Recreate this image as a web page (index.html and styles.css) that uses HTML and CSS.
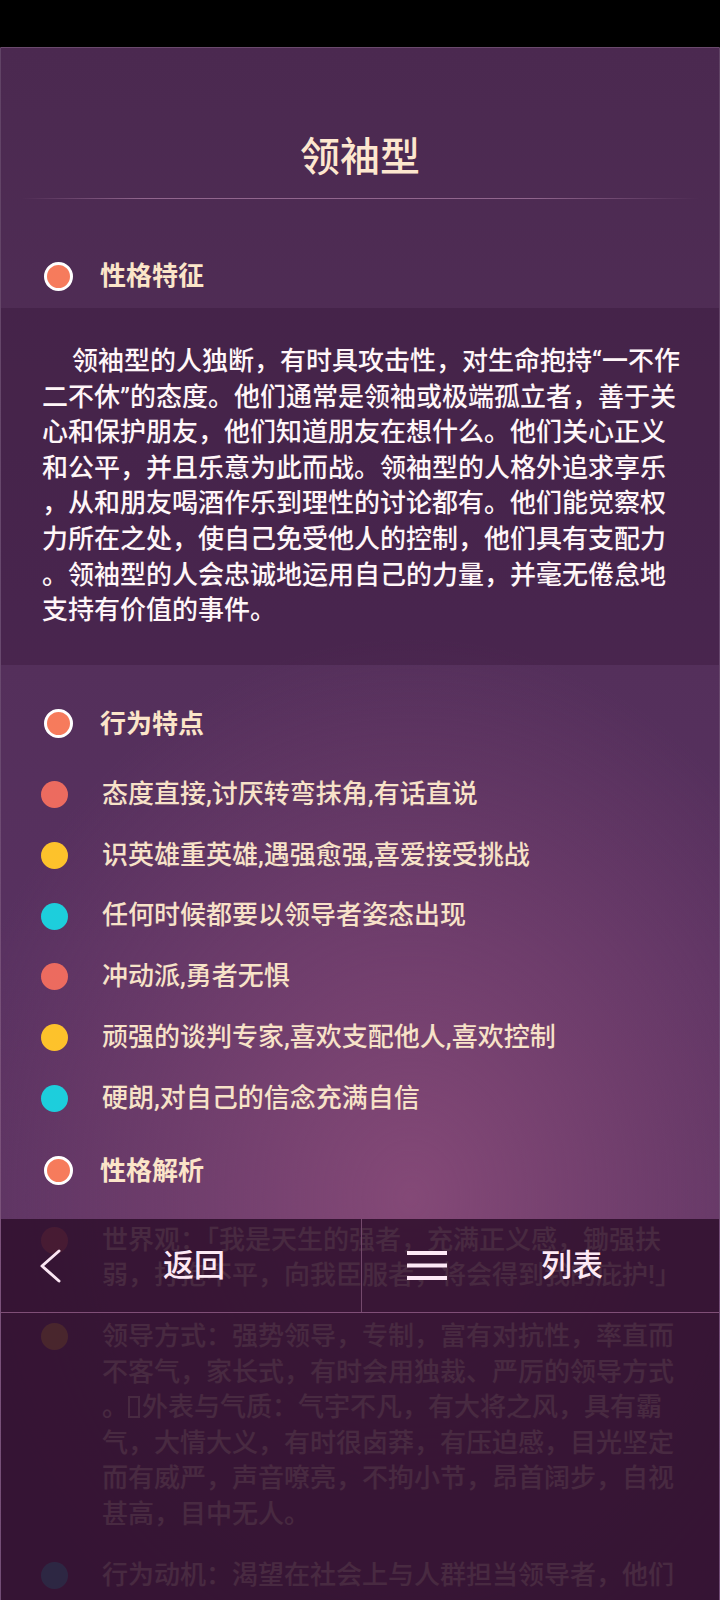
FILE: index.html
```html
<!DOCTYPE html>
<html lang="zh-CN">
<head>
<meta charset="utf-8">
<title>领袖型</title>
<link rel="stylesheet" href="styles.css">
</head>
<body>
<div class="status"></div>
<div class="app">
  <header class="title-bar">
    <h1 class="title">领袖型</h1>
    <div class="divider"></div>
  </header>

  <section class="sec sec-first">
    <div class="sec-head"><span class="ring"></span><h2>性格特征</h2></div>
    <div class="para">
      <p class="para-text"><span class="indent"></span>领袖型的人独断，有时具攻击性，对生命抱持“一不作<br>二不休”的态度。他们通常是领袖或极端孤立者，善于关<br>心和保护朋友，他们知道朋友在想什么。他们关心正义<br>和公平，并且乐意为此而战。领袖型的人格外追求享乐<br>，从和朋友喝酒作乐到理性的讨论都有。他们能觉察权<br>力所在之处，使自己免受他人的控制，他们具有支配力<br>。领袖型的人会忠诚地运用自己的力量，并毫无倦怠地<br>支持有价值的事件。</p>
    </div>
  </section>

  <section class="sec sec-second">
    <div class="sec-head"><span class="ring"></span><h2>行为特点</h2></div>
    <ul class="items">
      <li><span class="dot coral"></span><p>态度直接,讨厌转弯抹角,有话直说</p></li>
      <li><span class="dot yellow"></span><p>识英雄重英雄,遇强愈强,喜爱接受挑战</p></li>
      <li><span class="dot cyan"></span><p>任何时候都要以领导者姿态出现</p></li>
      <li><span class="dot coral"></span><p>冲动派,勇者无惧</p></li>
      <li><span class="dot yellow"></span><p>顽强的谈判专家,喜欢支配他人,喜欢控制</p></li>
      <li><span class="dot cyan"></span><p>硬朗,对自己的信念充满自信</p></li>
    </ul>
  </section>

  <section class="sec sec-third">
    <div class="sec-head"><span class="ring"></span><h2>性格解析</h2></div>
    <ul class="items items-tight">
      <li><span class="dot coral"></span><p>世界观：「我是天生的强者，充满正义感，锄强扶<br>弱，打抱不平，向我臣服者，将会得到我的庇护!」</p></li>
      <li><span class="dot yellow"></span><p>领导方式：强势领导，专制，富有对抗性，率直而<br>不客气，家长式，有时会用独裁、严厉的领导方式<br>。<span class="tofu"></span>外表与气质：气宇不凡，有大将之风，具有霸<br>气，大情大义，有时很卤莽，有压迫感，目光坚定<br>而有威严，声音嘹亮，不拘小节，昂首阔步，自视<br>甚高，目中无人。</p></li>
      <li><span class="dot cyan"></span><p>行为动机：渴望在社会上与人群担当领导者，他们</p></li>
    </ul>
  </section>

  <div class="overlay">
    <nav class="navbar">
      <a class="nav-btn nav-back">
        <svg class="chev" width="22" height="34" viewBox="0 0 22 34"><polyline points="20,2 3,17 20,32" fill="none" stroke="#fbe6f3" stroke-width="3" stroke-linecap="round" stroke-linejoin="round"/></svg>
        <span class="nav-label">返回</span>
      </a>
      <a class="nav-btn nav-list">
        <svg class="burger" width="40" height="29" viewBox="0 0 40 29"><rect x="0" y="0" width="40" height="4" fill="#fde8f6"/><rect x="0" y="12.5" width="40" height="4" fill="#fde8f6"/><rect x="0" y="25" width="40" height="4" fill="#fde8f6"/></svg>
        <span class="nav-label">列表</span>
      </a>
    </nav>
  </div>
</div>
</body>
</html>
```

FILE: styles.css
```css
* { box-sizing: border-box; }

html, body {
  margin: 0;
  padding: 0;
  width: 720px;
  height: 1600px;
  overflow: hidden;
  background: #000;
  font-family: Roboto, "Noto Sans CJK SC", "Noto Sans", sans-serif;
}

.status {
  height: 47px;
  background: #000;
}

.app {
  position: relative;
  height: 1553px;
  overflow: hidden;
  border-top: 1px solid #6a4a6c;
  border-left: 1px solid rgba(255, 255, 255, 0.12);
  border-right: 1px solid rgba(255, 255, 255, 0.12);
  background:
    radial-gradient(ellipse 470px 560px at 410px 1150px, rgba(134, 74, 120, 0.95) 0%, rgba(134, 74, 120, 0) 100%),
    linear-gradient(180deg, #4b2950 0px, #512e57 400px, #583160 900px, #5d3462 1552px);
}

.title-bar {
  padding-top: 85px;
}

.title {
  margin: 0;
  height: 50px;
  line-height: 50px;
  text-align: center;
  font-size: 40px;
  font-weight: 500;
  color: #fde7cf;
}

.divider {
  margin: 15px 20px 0;
  height: 1px;
  background: linear-gradient(90deg, rgba(200, 150, 190, 0) 0%, rgba(200, 150, 190, 0.55) 18%, rgba(200, 150, 190, 0.55) 75%, rgba(200, 150, 190, 0) 100%);
}

.sec-first { margin-top: 57px; }
.sec-second { margin-top: 39px; }
.sec-third { margin-top: 34.4px; }

.sec-head {
  display: flex;
  align-items: center;
  height: 40px;
  padding-left: 43px;
  gap: 27px;
}

.ring {
  width: 29px;
  height: 29px;
  border-radius: 50%;
  border: 3px solid #ffffff;
  background: #f67b5c;
  flex: none;
}

.sec-head h2 {
  margin: 0;
  font-size: 26px;
  font-weight: 700;
  color: #fbe5c9;
  line-height: 40px;
}

.para {
  margin-top: 12px;
  padding: 36px 0 36px 41px;
  background: rgba(28, 2, 30, 0.2);
}

.para-text {
  margin: 0;
  font-size: 26px;
  font-weight: 500;
  line-height: 35.6px;
  color: #fff6f8;
  white-space: nowrap;
}

.indent {
  display: inline-block;
  width: 30px;
}

.items {
  list-style: none;
  margin: 33px 0 0;
  padding: 0;
  display: flex;
  flex-direction: column;
  gap: 25.2px;
}

.items-tight { margin-top: 32px; }

.items li {
  display: flex;
  align-items: flex-start;
  padding-left: 40px;
  gap: 34px;
}

.items p {
  margin: 0;
  font-size: 26px;
  font-weight: 500;
  line-height: 35.6px;
  color: #f7e2c8;
  white-space: nowrap;
}

.dot {
  flex: none;
  width: 27px;
  height: 27px;
  border-radius: 50%;
  margin-top: 4.3px;
}

.coral { background: #ec6b5f; }
.yellow { background: #fdc22b; }
.cyan { background: #1dcedc; }

.tofu {
  display: inline-block;
  width: 12px;
  height: 22px;
  border: 2px solid #f7e2c8;
  vertical-align: -2px;
  margin-right: 2px;
}

.overlay {
  position: absolute;
  top: 1171px;
  left: 0;
  right: 0;
  bottom: 0;
  background: rgba(48, 16, 46, 0.88);
}

.navbar {
  display: flex;
  height: 94px;
  border-bottom: 1px solid #7f4f77;
}

.nav-btn {
  display: flex;
  align-items: center;
  height: 100%;
}

.nav-back {
  width: 361px;
  padding-left: 38px;
  gap: 102px;
  border-right: 1px solid #74496c;
}

.nav-list {
  flex: 1;
  padding-left: 45px;
  gap: 94px;
}

.chev, .burger { flex: none; display: block; }

.nav-label {
  font-size: 31px;
  font-weight: 500;
  color: #fde9f5;
  line-height: 40px;
}
```
